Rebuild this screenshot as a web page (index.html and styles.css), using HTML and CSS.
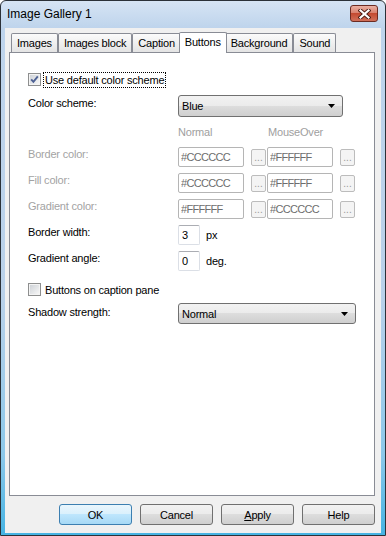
FILE: index.html
```html
<!DOCTYPE html>
<html lang="en">
<head>
  <meta charset="UTF-8">
  <meta name="viewport" content="width=device-width, initial-scale=1.0">
  <title>Image Gallery 1</title>
  <link rel="stylesheet" href="styles.css">
</head>
<body>
  <div class="window">
    <div class="titlebar">
      <span class="title">Image Gallery 1</span>
      <span class="close">
        <svg width="13" height="10" viewBox="0 0 13 10">
          <path d="M2.5 1.5L10.5 8.5M10.5 1.5L2.5 8.5" stroke="#4b1c14" stroke-width="4" stroke-linecap="square"/>
          <path d="M2.5 1.5L10.5 8.5M10.5 1.5L2.5 8.5" stroke="#fff" stroke-width="2.2" stroke-linecap="square"/>
        </svg>
      </span>
    </div>

    <div class="client">
      <div class="tabs">
        <span class="tab">Images</span>
        <span class="tab">Images block</span>
        <span class="tab">Caption</span>
        <span class="tab active">Buttons</span>
        <span class="tab">Background</span>
        <span class="tab">Sound</span>
      </div>

      <div class="panel">
        <div class="row check-row">
          <span class="checkbox">
            <svg width="13" height="13" viewBox="0 0 13 13">
              <defs>
                <linearGradient id="cb1" x1="0" y1="0" x2="1" y2="1">
                  <stop offset="0" stop-color="#cfd3d8"/>
                  <stop offset="1" stop-color="#f6f6f6"/>
                </linearGradient>
              </defs>
              <rect x="0.5" y="0.5" width="12" height="12" fill="#f4f4f4" stroke="#8e8f8f"/>
              <rect x="2" y="2" width="9" height="9" fill="url(#cb1)"/>
              <path d="M3.2 6.4L5.4 8.8L9.8 3.4" fill="none" stroke="#4d6194" stroke-width="1.9"/>
            </svg>
          </span>
          <span class="focus">Use default color scheme</span>
        </div>

        <div class="row scheme-row">
          <span class="label">Color scheme:</span>
          <div class="combo combo-scheme">
            <span>Blue</span>
            <svg width="7" height="4" viewBox="0 0 7 4"><path d="M0 0h7L3.5 4z" fill="#000"/></svg>
          </div>
        </div>

        <div class="row heads">
          <span class="label"></span>
          <span class="head head-normal">Normal</span>
          <span class="head">MouseOver</span>
        </div>

        <div class="row field first">
          <span class="label off">Border color:</span>
          <input class="color" type="text" value="#CCCCCC" disabled>
          <button class="pick" disabled>...</button>
          <input class="color" type="text" value="#FFFFFF" disabled>
          <button class="pick" disabled>...</button>
        </div>
        <div class="row field">
          <span class="label off">Fill color:</span>
          <input class="color" type="text" value="#CCCCCC" disabled>
          <button class="pick" disabled>...</button>
          <input class="color" type="text" value="#FFFFFF" disabled>
          <button class="pick" disabled>...</button>
        </div>
        <div class="row field">
          <span class="label off">Gradient color:</span>
          <input class="color" type="text" value="#FFFFFF" disabled>
          <button class="pick" disabled>...</button>
          <input class="color" type="text" value="#CCCCCC" disabled>
          <button class="pick" disabled>...</button>
        </div>
        <div class="row field">
          <span class="label">Border width:</span>
          <input class="num" type="text" value="3">
          <span class="unit">px</span>
        </div>
        <div class="row field">
          <span class="label">Gradient angle:</span>
          <input class="num" type="text" value="0">
          <span class="unit">deg.</span>
        </div>

        <div class="row check-row caption-row">
          <span class="checkbox">
            <svg width="13" height="13" viewBox="0 0 13 13">
              <defs>
                <linearGradient id="cb2" x1="0" y1="0" x2="1" y2="1">
                  <stop offset="0" stop-color="#cfd3d8"/>
                  <stop offset="1" stop-color="#f6f6f6"/>
                </linearGradient>
              </defs>
              <rect x="0.5" y="0.5" width="12" height="12" fill="#f4f4f4" stroke="#8e8f8f"/>
              <rect x="2" y="2" width="9" height="9" fill="url(#cb2)"/>
            </svg>
          </span>
          <span class="check-text">Buttons on caption pane</span>
        </div>

        <div class="row shadow-row">
          <span class="label">Shadow strength:</span>
          <div class="combo combo-shadow">
            <span>Normal</span>
            <svg width="7" height="4" viewBox="0 0 7 4"><path d="M0 0h7L3.5 4z" fill="#000"/></svg>
          </div>
        </div>
      </div>

      <div class="actions">
        <button class="btn default">OK</button>
        <button class="btn">Cancel</button>
        <button class="btn"><u>A</u>pply</button>
        <button class="btn">Help</button>
      </div>
    </div>
  </div>
</body>
</html>
```

FILE: styles.css
```css
body {
  margin: 0;
  font-family: "Liberation Sans", Arial, sans-serif;
  font-size: 11px;
  letter-spacing: -0.2px;
  color: #000;
  background: #fff;
}
.window {
  width: 386px;
  height: 536px;
  box-sizing: border-box;
  border: 1px solid #2b3138;
  border-radius: 6px 6px 0 0;
  padding: 0 4px 2px 4px;
  display: flex;
  flex-direction: column;
  background: linear-gradient(#d6e4f4 0, #bed4ec 27px, #b9d1ea 55%, #8cc8ea 85%, #45b3e3 100%);
}
.titlebar {
  height: 27px;
  margin: 0 -4px;
  padding: 4px 7px 0 6px;
  box-sizing: border-box;
  display: flex;
  justify-content: space-between;
  align-items: flex-start;
}
.title {
  font-size: 12px;
  letter-spacing: 0;
  line-height: 17px;
  margin-top: 1px;
}
.close {
  width: 28px;
  height: 17px;
  box-sizing: border-box;
  border: 1px solid #6b2b22;
  border-radius: 3px;
  background: linear-gradient(#eab0a2, #d98270 45%, #c44a31 50%, #d0705a);
  display: flex;
  align-items: center;
  justify-content: center;
}
.client {
  flex: 1;
  background: #f0f0f0;
  padding: 0 6px 8px 4px;
  display: flex;
  flex-direction: column;
}
.tabs {
  height: 24px;
  display: flex;
  align-items: flex-end;
  padding-left: 2px;
}
.tab {
  height: 19px;
  box-sizing: border-box;
  padding: 0 5px;
  border: 1px solid #898c95;
  border-bottom: none;
  border-radius: 2px 2px 0 0;
  background: linear-gradient(#fbfbfb, #e4e4e4);
  line-height: 18px;
}
.tab.active {
  height: 21px;
  margin: 0 -2px -1px;
  background: #fff;
  line-height: 19px;
  position: relative;
  z-index: 1;
}
.panel {
  flex: 1;
  background: #fff;
  border: 1px solid #898c95;
  padding: 18px 18px 0 18px;
}
.row {
  display: flex;
  align-items: flex-start;
}
.label {
  width: 150px;
  flex: none;
  line-height: 13px;
  padding-top: 1px;
}
.label.off {
  color: #a3a3a3;
}
.check-row {
  height: 17px;
  align-items: center;
}
.checkbox {
  width: 13px;
  height: 13px;
  display: flex;
}
.focus {
  margin-left: 2px;
  padding: 0 1px;
  border: 1px dotted #000;
  line-height: 14px;
}
.check-text {
  margin-left: 4px;
  line-height: 14px;
}
.scheme-row {
  margin-top: 7px;
}
.scheme-row .label {
  padding-top: 2px;
}
.combo {
  box-sizing: border-box;
  border: 1px solid #707070;
  border-radius: 3px;
  background: linear-gradient(#f2f2f2, #ebebeb 50%, #dddddd 50%, #cfcfcf);
  display: flex;
  align-items: center;
  justify-content: space-between;
  padding: 0 7px 0 3px;
}
.combo-scheme {
  width: 165px;
  height: 22px;
}
.combo-shadow {
  width: 179px;
  height: 21px;
}
.heads {
  margin-top: 9px;
  line-height: 13px;
}
.head {
  color: #a0a0a0;
}
.head-normal {
  width: 90px;
}
.field {
  margin-top: 6px;
  height: 20px;
}
.field.first {
  margin-top: 8px;
}
.color {
  width: 66px;
  height: 20px;
  box-sizing: border-box;
  border: 1px solid #b5b5b5;
  border-radius: 2px;
  padding: 0 2px;
  margin: 0;
  font-family: inherit;
  font-size: 11px;
  letter-spacing: -0.7px;
  color: #6d6d6d;
  background: #fff;
}
.pick {
  width: 16px;
  height: 17px;
  margin: 2px 1px 0 7px;
  box-sizing: border-box;
  border: 1px solid #bcbcbc;
  border-radius: 2px;
  background: #f4f4f4;
  color: #9a9a9a;
  font-family: inherit;
  font-size: 10px;
  padding: 0 0 2px 0;
  display: flex;
  align-items: flex-end;
  justify-content: center;
}
.num {
  width: 22px;
  height: 20px;
  box-sizing: border-box;
  border: 1px solid #dbdfe6;
  border-top-color: #abadb3;
  border-radius: 2px;
  padding: 0 3px;
  margin: 0;
  font-family: inherit;
  font-size: 11px;
  color: #000;
  background: #fff;
}
.unit {
  align-self: center;
  margin-left: 6px;
}
.caption-row {
  margin-top: 10px;
}
.shadow-row {
  margin-top: 5px;
}
.shadow-row .label {
  padding-top: 3px;
}
.actions {
  display: flex;
  justify-content: flex-end;
  gap: 8px;
  margin-top: 8px;
}
.btn {
  width: 73px;
  height: 21px;
  box-sizing: border-box;
  border: 1px solid #707070;
  border-radius: 3px;
  background: linear-gradient(#f2f2f2, #ebebeb 50%, #dddddd 50%, #cfcfcf);
  font-family: inherit;
  font-size: 11px;
  letter-spacing: inherit;
  color: #000;
  padding: 0;
}
.btn.default {
  border-color: #3c7fb1;
  background: linear-gradient(#eaf6fd, #d9f0fc 50%, #bee6fd 50%, #a7d9f5);
}
```
